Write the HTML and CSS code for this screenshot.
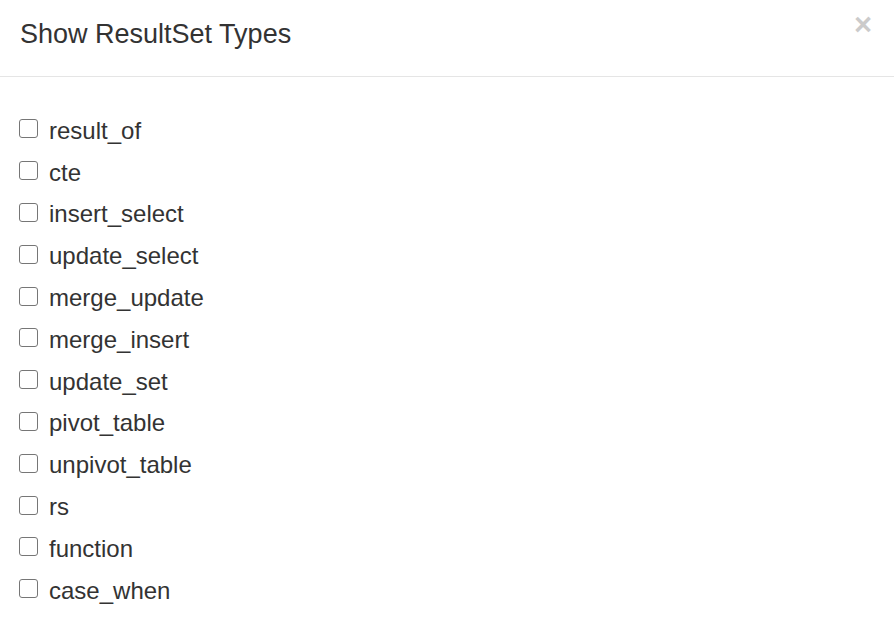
FILE: index.html
```html
<!DOCTYPE html>
<html>
<head>
<meta charset="utf-8">
<link rel="stylesheet" href="styles.css">
</head>
<body>
<div class="modal">
  <div class="modal-header">
    <h4 class="modal-title">Show ResultSet Types</h4>
    <button class="close" type="button">×</button>
  </div>
  <div class="modal-body">
    <label class="row"><input type="checkbox"><span>result_of</span></label>
    <label class="row"><input type="checkbox"><span>cte</span></label>
    <label class="row"><input type="checkbox"><span>insert_select</span></label>
    <label class="row"><input type="checkbox"><span>update_select</span></label>
    <label class="row"><input type="checkbox"><span>merge_update</span></label>
    <label class="row"><input type="checkbox"><span>merge_insert</span></label>
    <label class="row"><input type="checkbox"><span>update_set</span></label>
    <label class="row"><input type="checkbox"><span>pivot_table</span></label>
    <label class="row"><input type="checkbox"><span>unpivot_table</span></label>
    <label class="row"><input type="checkbox"><span>rs</span></label>
    <label class="row"><input type="checkbox"><span>function</span></label>
    <label class="row"><input type="checkbox"><span>case_when</span></label>
  </div>
</div>
</body>
</html>
```
FILE: styles.css
```css
html, body {
  margin: 0;
  padding: 0;
  background: #fff;
}
body {
  font-family: "Liberation Sans", Arial, sans-serif;
  color: #333;
}
.modal {
  width: 894px;
  min-height: 634px;
  background: #fff;
}
.modal-header {
  height: 76px;
  border-bottom: 1px solid #e5e5e5;
  display: flex;
  align-items: flex-start;
  justify-content: space-between;
  padding: 0 20px;
}
.modal-title {
  margin: 0;
  padding-top: 15px;
  font-size: 27px;
  font-weight: normal;
  line-height: 38px;
}
.close {
  border: 0;
  background: none;
  padding: 0;
  margin: 6px 2px 0 0;
  font-family: "Liberation Sans", Arial, sans-serif;
  font-size: 31px;
  font-weight: bold;
  line-height: 38px;
  color: #000;
  opacity: 0.2;
  cursor: pointer;
}
.modal-body {
  padding: 33px 20px 22px;
  display: flex;
  flex-direction: column;
}
.row {
  height: 41.8px;
  display: flex;
  align-items: center;
  font-size: 24px;
}
.row input {
  appearance: none;
  -webkit-appearance: none;
  margin: 0 11px 0 -1px;
  width: 19px;
  height: 19px;
  box-sizing: border-box;
  border: 1.5px solid #767676;
  border-radius: 3px;
  background: #fff;
  position: relative;
  top: -2px;
}
```
